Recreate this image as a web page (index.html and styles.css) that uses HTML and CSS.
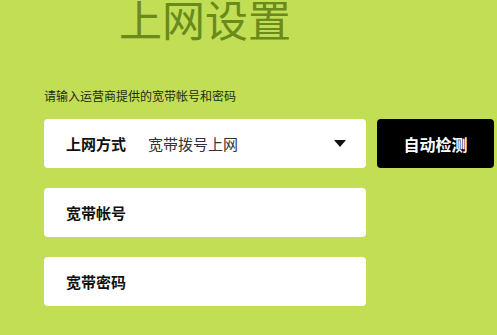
FILE: index.html
```html
<!DOCTYPE html>
<html lang="zh-CN">
<head>
    <meta charset="UTF-8">
    <meta name="viewport" content="width=device-width, initial-scale=1.0">
    <title>上网设置</title>
    <link rel="stylesheet" href="styles.css">
</head>
<body>

<div class="setup">
    <h1 class="setup-title">上网设置</h1>
    <p class="hint">请输入运营商提供的宽带帐号和密码</p>

    <!-- 上网方式 + 自动检测 -->
    <div class="row">
        <div class="field">
            <span class="field-label">上网方式</span>
            <span class="field-value">宽带拨号上网</span>
            <span class="arrow"></span>
        </div>
        <button class="detect">自动检测</button>
    </div>

    <div class="row">
        <div class="field">
            <span class="field-label">宽带帐号</span>
        </div>
    </div>

    <div class="row">
        <div class="field">
            <span class="field-label">宽带密码</span>
        </div>
    </div>
</div>

</body>
</html>
```

FILE: styles.css
```css
/* 页面 */
body {
    margin: 0;
    background: #c1de55;
    font-family: "Noto Sans CJK SC", "Noto Sans", sans-serif;
    color: #222;
}

.setup {
    padding-left: 44px;
}

.setup-title {
    width: 322px;
    margin: -5px 0 0;
    font-size: 43px;
    line-height: 46px;
    font-weight: 400;
    text-align: center;
    color: #6b8a1c;
}

.hint {
    margin: 47px 0 15px;
    font-size: 12px;
    line-height: 16px;
    color: #262a1a;
}

/* 表单行 */
.row {
    display: flex;
    align-items: center;
    margin-bottom: 20px;
}

.field {
    width: 322px;
    height: 49px;
    background: #fff;
    border-radius: 4px;
    display: flex;
    align-items: center;
    padding: 0 20px 0 22px;
    box-sizing: border-box;
}

.field-label {
    font-size: 15px;
    font-weight: 700;
    color: #111;
    width: 60px;
}

.field-value {
    margin-left: 22px;
    font-size: 15px;
    color: #333;
    flex: 1;
}

.arrow {
    width: 0;
    height: 0;
    border-left: 6px solid transparent;
    border-right: 6px solid transparent;
    border-top: 7px solid #111;
}

.detect {
    margin-left: 11px;
    width: 117px;
    height: 49px;
    border: none;
    border-radius: 4px;
    background: #000;
    color: #fff;
    font-family: inherit;
    font-size: 16px;
    font-weight: 700;
    cursor: pointer;
}
```
